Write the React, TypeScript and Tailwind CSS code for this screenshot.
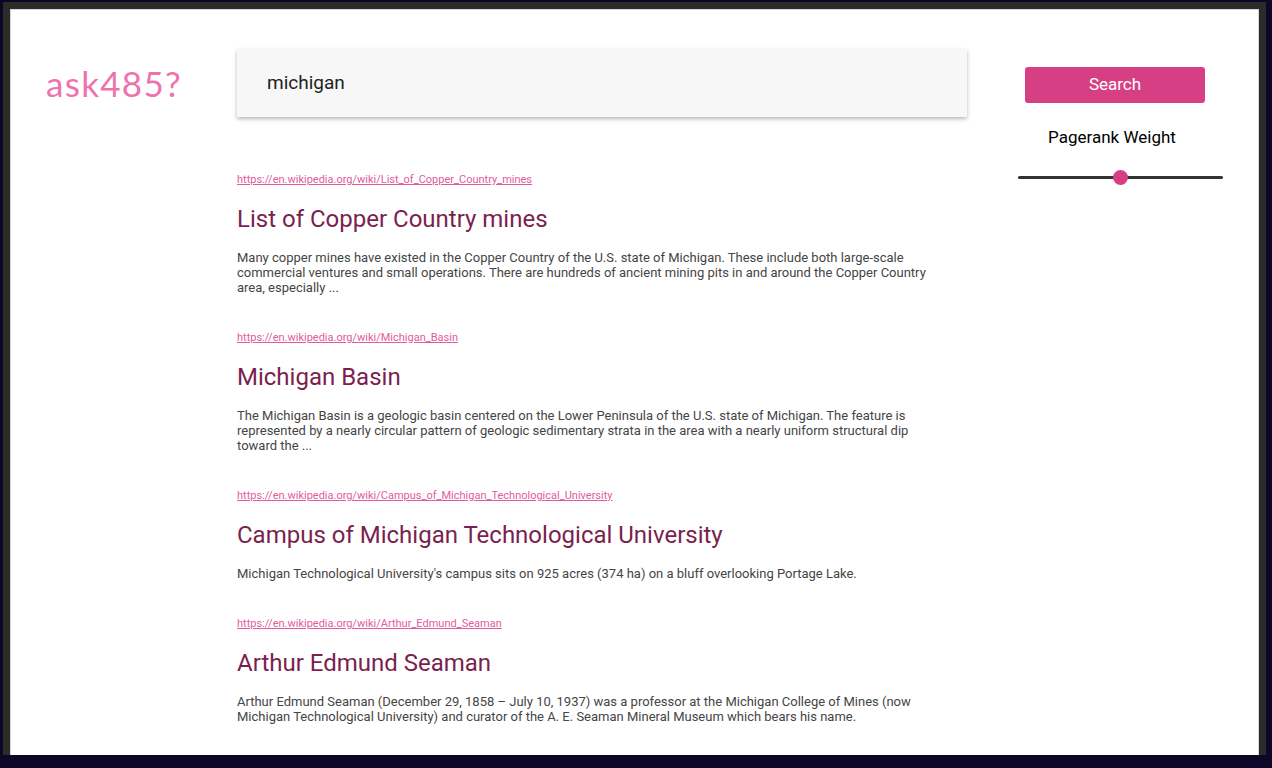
import React from "react";

const results = [
  {
    url: "https://en.wikipedia.org/wiki/List_of_Copper_Country_mines",
    title: "List of Copper Country mines",
    text: "Many copper mines have existed in the Copper Country of the U.S. state of Michigan. These include both large-scale commercial ventures and small operations. There are hundreds of ancient mining pits in and around the Copper Country area, especially ...",
  },
  {
    url: "https://en.wikipedia.org/wiki/Michigan_Basin",
    title: "Michigan Basin",
    text: "The Michigan Basin is a geologic basin centered on the Lower Peninsula of the U.S. state of Michigan. The feature is represented by a nearly circular pattern of geologic sedimentary strata in the area with a nearly uniform structural dip toward the ...",
  },
  {
    url: "https://en.wikipedia.org/wiki/Campus_of_Michigan_Technological_University",
    title: "Campus of Michigan Technological University",
    text: "Michigan Technological University's campus sits on 925 acres (374 ha) on a bluff overlooking Portage Lake.",
  },
  {
    url: "https://en.wikipedia.org/wiki/Arthur_Edmund_Seaman",
    title: "Arthur Edmund Seaman",
    text: "Arthur Edmund Seaman (December 29, 1858 – July 10, 1937) was a professor at the Michigan College of Mines (now Michigan Technological University) and curator of the A. E. Seaman Mineral Museum which bears his name.",
  },
];

export default function App() {
  return (
    <div className="h-[768px] w-[1272px] overflow-hidden bg-[#0c0628] pl-[3px] pr-[6px] pt-[2px]">
      <div className="flex h-[753px] flex-col bg-[#2b2b27] pl-[7px] pr-[7px] pt-[7px]">
        <div
          className="flex-1 overflow-hidden border border-b-0 border-[#d6d6d6] bg-white pt-[39px]"
          style={{ fontFamily: "Roboto, 'Liberation Sans', sans-serif" }}
        >
          <div className="flex">
            <div className="w-[226px] shrink-0 pl-[35px] pt-[13px]">
              <div
                className="text-[35px] leading-[42px] tracking-[1.3px] text-[#ee72ae]"
                style={{ fontFamily: "Lato, 'Noto Sans', sans-serif" }}
              >
                ask485?
              </div>
            </div>

            <div className="w-[730px] shrink-0">
              <div className="flex h-[68px] items-center bg-[#f7f7f7] pl-[30px] shadow-[0_2px_4px_rgba(0,0,0,0.28)]">
                <span className="text-[19px] text-[#222]">michigan</span>
              </div>

              <div className="mt-[56px] flex w-[692px] flex-col gap-[36px]">
                {results.map((r) => (
                  <div key={r.url}>
                    <a className="block text-[11px] leading-[13px] text-[#e25b9d] underline">
                      {r.url}
                    </a>
                    <h2 className="mt-[18px] text-[24px] leading-[31px] text-[#7b1f4f]">
                      {r.title}
                    </h2>
                    <p className="mt-[15px] text-[13px] leading-[15px] text-[#454545]">
                      {r.text}
                    </p>
                  </div>
                ))}
              </div>
            </div>

            <div className="ml-[51px] w-[205px] shrink-0 pt-[18px]">
              <button className="ml-[7px] flex h-[36px] w-[180px] items-center justify-center rounded-[3px] bg-[#d63f84] text-[17px] text-white">
                Search
              </button>
              <div className="mt-[24px] pr-[17px] text-center text-[17px] leading-[20px] text-black">
                Pagerank Weight
              </div>
              <div className="relative mt-[23px] h-[15px]">
                <div className="absolute left-0 right-0 top-[6px] h-[3px] rounded-full bg-[#333]" />
                <div className="absolute left-[95px] top-0 h-[15px] w-[15px] rounded-full bg-[#d63f84]" />
              </div>
            </div>
          </div>
        </div>
      </div>
    </div>
  );
}
